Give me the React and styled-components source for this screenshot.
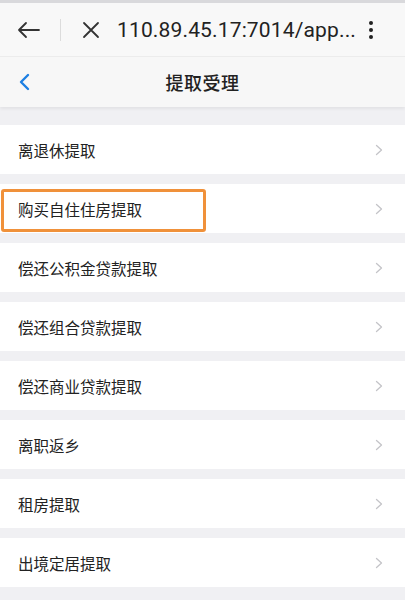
import styled, { createGlobalStyle } from 'styled-components';

const GlobalStyle = createGlobalStyle`
  html, body {
    margin: 0;
    padding: 0;
    background: #f0f0f3;
    font-family: "Noto Sans CJK SC", Roboto, "Noto Sans", sans-serif;
  }
`;

const items = [
  '离退休提取',
  '购买自住住房提取',
  '偿还公积金贷款提取',
  '偿还组合贷款提取',
  '偿还商业贷款提取',
  '离职返乡',
  '租房提取',
  '出境定居提取',
];

function App() {
  return (
    <>
      <GlobalStyle />
      <Page>
        <BrowserBar>
          <IconSlot>
            <svg width="24" height="18" viewBox="0 0 24 18" fill="none" stroke="#333" strokeWidth="1.8" strokeLinecap="round" strokeLinejoin="round">
              <path d="M22 9H2M9 2L2 9l7 7" />
            </svg>
          </IconSlot>
          <Divider />
          <IconSlot>
            <svg width="18" height="18" viewBox="0 0 18 18" fill="none" stroke="#333" strokeWidth="1.8" strokeLinecap="round">
              <path d="M2 2l14 14M16 2L2 16" />
            </svg>
          </IconSlot>
          <Url>110.89.45.17:7014/app...</Url>
          <Kebab>
            <span />
            <span />
            <span />
          </Kebab>
        </BrowserBar>
        <NavBar>
          <BackButton>
            <svg width="11" height="18" viewBox="0 0 11 18" fill="none" stroke="#1d7fe2" strokeWidth="2.4" strokeLinecap="round" strokeLinejoin="round">
              <path d="M9 2L2 9l7 7" />
            </svg>
          </BackButton>
          <Title>提取受理</Title>
        </NavBar>
        <List>
          {items.map((label, i) => (
            <Row key={label}>
              <Label $highlight={i === 1}>{label}</Label>
              <svg width="8" height="12" viewBox="0 0 8 12" fill="none" stroke="#c4c4c8" strokeWidth="1.3" strokeLinecap="round" strokeLinejoin="round">
                <path d="M1.5 1.5L6.5 6l-5 4.5" />
              </svg>
            </Row>
          ))}
        </List>
      </Page>
    </>
  );
}

const Page = styled.div`
  width: 405px;
  min-height: 600px;
  background: #f0f0f3;
  border-top: 3px solid #d9d9dc;
`;

const BrowserBar = styled.div`
  height: 53px;
  display: flex;
  align-items: center;
  padding: 0 0 0 16px;
  background: #f8f8f8;
  border-bottom: 1px solid #ececec;
`;

const IconSlot = styled.div`
  display: flex;
  align-items: center;
  justify-content: center;
  width: 26px;
`;

const Divider = styled.div`
  width: 1px;
  height: 22px;
  background: #dcdcdc;
  margin: 0 17px 0 18px;
`;

const Url = styled.div`
  margin-left: 13px;
  font-family: Roboto, "Noto Sans", sans-serif;
  font-size: 21px;
  color: #222;
  letter-spacing: 0.15px;
  white-space: nowrap;
`;

const Kebab = styled.div`
  margin-left: 13px;
  display: flex;
  flex-direction: column;
  gap: 3px;

  span {
    width: 4px;
    height: 4px;
    border-radius: 50%;
    background: #222;
  }
`;

const NavBar = styled.div`
  position: relative;
  height: 50px;
  display: flex;
  align-items: center;
  justify-content: center;
  background: #f7f7f7;
  box-shadow: 0 2px 3px rgba(0, 0, 0, 0.06);
`;

const BackButton = styled.div`
  position: absolute;
  left: 19px;
  top: 16px;
  display: flex;
`;

const Title = styled.div`
  font-size: 18px;
  font-weight: 500;
  color: #222;
  letter-spacing: 0.5px;
`;

const List = styled.div`
  display: flex;
  flex-direction: column;
  gap: 10px;
  padding-top: 18px;
`;

const Row = styled.div`
  position: relative;
  height: 49px;
  display: flex;
  align-items: center;
  justify-content: space-between;
  padding: 0 22px 0 18px;
  background: #fff;
`;

const Label = styled.span`
  font-size: 15.5px;
  color: #222;

  &::after {
    content: '';
    display: ${(p) => (p.$highlight ? 'block' : 'none')};
    position: absolute;
    left: 1px;
    top: 5px;
    width: 199px;
    height: 37px;
    border: 3px solid #f0913a;
    border-radius: 3px;
  }
`;

export default App;
